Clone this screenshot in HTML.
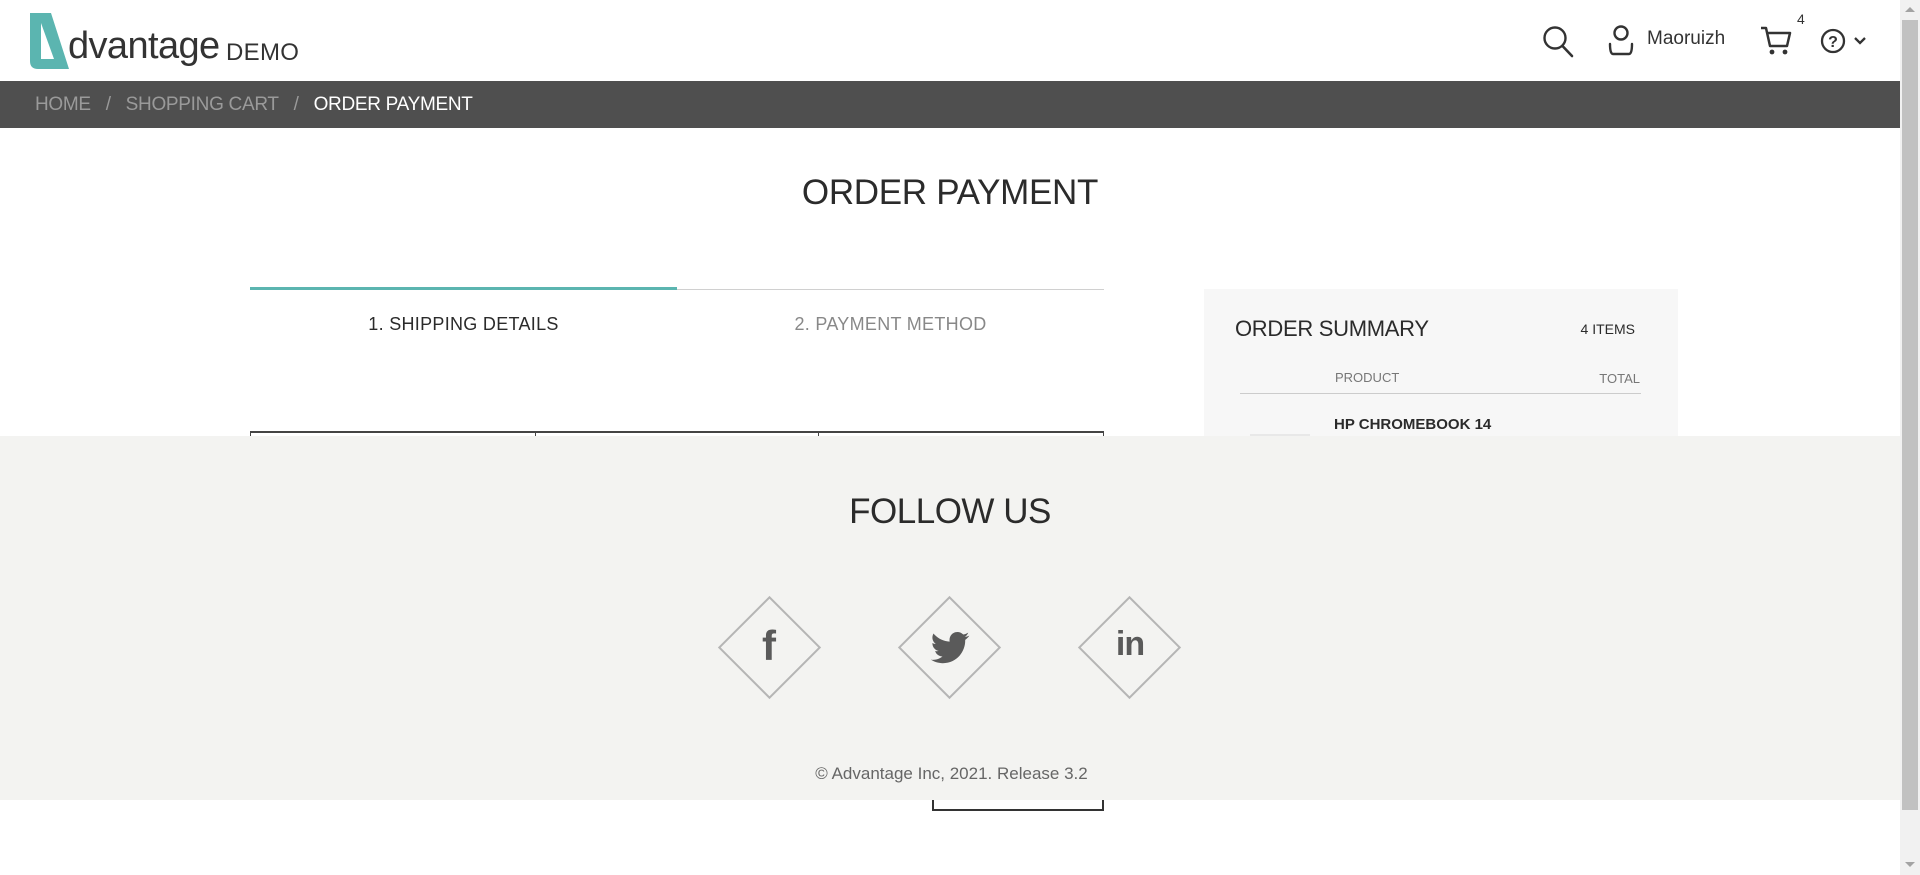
<!DOCTYPE html>
<html><head><meta charset="utf-8"><style>
*{margin:0;padding:0;box-sizing:border-box}
body{width:1920px;height:875px;overflow:hidden;background:#fff;font-family:"Liberation Sans",sans-serif;position:relative;color:#2b2b2b}
.abs{position:absolute}
</style></head><body>
<div class="abs" style="left:0;top:0;width:1900px;height:81px;background:#fff"></div>
<svg class="abs" style="left:0;top:0" width="80" height="80" viewBox="0 0 80 80">
<path d="M30 13 H51 L69 69 H38 Q30 69 30 61 Z M41 23 L54 59 H41 Z" fill="#5bb5b0" fill-rule="evenodd"/>
</svg>
<div class="abs" style="left:68px;top:25px;font-size:38px;letter-spacing:-0.6px;color:#333">dvantage</div>
<div class="abs" style="left:226px;top:39px;font-size:24px;color:#333;letter-spacing:0.3px">DEMO</div>
<svg class="abs" style="left:1541px;top:25px" width="36" height="34" viewBox="0 0 36 34"><circle cx="14" cy="13" r="10.5" fill="none" stroke="#333" stroke-width="2.4"/><path d="M21.5 21 L31 31" stroke="#333" stroke-width="2.6" stroke-linecap="round"/></svg>
<svg class="abs" style="left:1607px;top:25px" width="28" height="31" viewBox="0 0 28 31"><circle cx="14" cy="8" r="6.5" fill="none" stroke="#333" stroke-width="2.4"/><path d="M3 19 Q3 29 6 29 H22 Q25 29 25 19" fill="none" stroke="#333" stroke-width="2.4" stroke-linecap="round"/></svg>
<div class="abs" style="left:1647px;top:28px;font-size:19px;color:#333">Maoruizh</div>
<svg class="abs" style="left:1760px;top:25px" width="34" height="32" viewBox="0 0 34 32"><path d="M1 3 H6 L10 21 H27 L30 8 H8" fill="none" stroke="#333" stroke-width="2.5" stroke-linejoin="round"/><circle cx="12" cy="27" r="2.4" fill="#333"/><circle cx="25" cy="27" r="2.4" fill="#333"/></svg>
<div class="abs" style="left:1797px;top:11px;font-size:14px;color:#333">4</div>
<svg class="abs" style="left:1820px;top:28px" width="52" height="28" viewBox="0 0 52 28"><circle cx="13" cy="13" r="11" fill="none" stroke="#333" stroke-width="2.3"/><text x="13" y="19" font-family="Liberation Sans" font-size="16" font-weight="bold" text-anchor="middle" fill="#333">?</text><path d="M35 10 L40 15 L45 10" fill="none" stroke="#333" stroke-width="2.3"/></svg>
<div class="abs" style="left:1900px;top:0;width:20px;height:875px;background:#f1f1f1"></div>
<div class="abs" style="left:1902px;top:20px;width:16px;height:790px;background:#c1c1c1"></div>
<div class="abs" style="left:1905px;top:7px;width:0;height:0;border-left:5px solid transparent;border-right:5px solid transparent;border-bottom:5px solid #a3a3a3"></div>
<div class="abs" style="left:1905px;top:862px;width:0;height:0;border-left:5px solid transparent;border-right:5px solid transparent;border-top:5px solid #a3a3a3"></div>
<div class="abs" style="left:0;top:81px;width:1900px;height:47px;background:#4f4f4f"></div>
<div class="abs" style="left:35px;top:94px;font-size:19px;letter-spacing:-0.3px;color:#9a9a9a;white-space:nowrap">HOME&nbsp;&nbsp;&nbsp;/&nbsp;&nbsp;&nbsp;SHOPPING CART&nbsp;&nbsp;&nbsp;/&nbsp;&nbsp;&nbsp;<span style="color:#fff">ORDER PAYMENT</span></div>
<div class="abs" style="left:0;top:173px;width:1900px;text-align:center;font-size:35px;letter-spacing:-0.3px;color:#2b2b2b">ORDER PAYMENT</div>
<div class="abs" style="left:250px;top:289px;width:854px;height:1px;background:#d0d0d0"></div>
<div class="abs" style="left:250px;top:287px;width:427px;height:3px;background:#5bb5b0"></div>
<div class="abs" style="left:250px;top:314px;width:427px;text-align:center;font-size:18px;letter-spacing:0.3px;color:#2b2b2b">1. SHIPPING DETAILS</div>
<div class="abs" style="left:677px;top:314px;width:427px;text-align:center;font-size:18px;letter-spacing:0.3px;color:#888">2. PAYMENT METHOD</div>
<div class="abs" style="left:250px;top:431px;width:854px;height:2px;background:#444"></div>
<div class="abs" style="left:250px;top:431px;width:1px;height:8px;background:#444"></div>
<div class="abs" style="left:535px;top:431px;width:1px;height:8px;background:#444"></div>
<div class="abs" style="left:818px;top:431px;width:1px;height:8px;background:#444"></div>
<div class="abs" style="left:1103px;top:431px;width:1px;height:8px;background:#444"></div>
<div class="abs" style="left:1204px;top:289px;width:474px;height:160px;background:#f7f7f7"></div>
<div class="abs" style="left:1235px;top:316px;font-size:22px;letter-spacing:-0.3px;color:#2b2b2b">ORDER SUMMARY</div>
<div class="abs" style="left:1568px;top:321px;width:67px;text-align:right;font-size:14px;color:#2b2b2b">4 ITEMS</div>
<div class="abs" style="left:1335px;top:370px;font-size:13px;color:#777">PRODUCT</div>
<div class="abs" style="left:1580px;top:371px;width:60px;text-align:right;font-size:13px;color:#777">TOTAL</div>
<div class="abs" style="left:1240px;top:393px;width:401px;height:1px;background:#ccc"></div>
<div class="abs" style="left:1334px;top:416px;font-size:15px;font-weight:bold;color:#2b2b2b">HP CHROMEBOOK 14</div>
<div class="abs" style="left:1250px;top:434px;width:60px;height:4px;background:#e8e8e8"></div>
<div class="abs" style="left:0;top:436px;width:1900px;height:364px;background:#f3f3f1"></div>
<div class="abs" style="left:0;top:492px;width:1900px;text-align:center;font-size:35px;letter-spacing:-0.5px;color:#2b2b2b">FOLLOW US</div>
<div class="abs" style="left:733px;top:611px;width:73px;height:73px;border:2px solid #b5b5b5;transform:rotate(45deg)"></div>
<div class="abs" style="left:913px;top:611px;width:73px;height:73px;border:2px solid #b5b5b5;transform:rotate(45deg)"></div>
<div class="abs" style="left:1093px;top:611px;width:73px;height:73px;border:2px solid #b5b5b5;transform:rotate(45deg)"></div>
<div class="abs" style="left:749px;top:622px;width:40px;text-align:center;font-size:42px;font-weight:bold;color:#5a5a5a">f</div>
<svg class="abs" style="left:930px;top:632px" width="40" height="32" viewBox="0 0 24 20"><path fill="#5a5a5a" d="M24 2.3c-.9.4-1.8.7-2.8.8 1-.6 1.8-1.6 2.2-2.7-1 .6-2 1-3.1 1.2C19.3.6 18 0 16.6 0c-2.7 0-4.9 2.2-4.9 4.9 0 .4 0 .8.1 1.1C7.7 5.8 4.1 3.9 1.7.9c-.4.7-.7 1.6-.7 2.5 0 1.7.9 3.2 2.2 4.1-.8 0-1.6-.2-2.2-.6v.1c0 2.4 1.7 4.4 3.9 4.8-.4.1-.8.2-1.3.2-.3 0-.6 0-.9-.1.6 2 2.4 3.4 4.6 3.4-1.7 1.3-3.8 2.1-6.1 2.1-.4 0-.8 0-1.2-.1 2.2 1.4 4.8 2.2 7.5 2.2 9.1 0 14-7.5 14-14v-.6c1-.7 1.8-1.6 2.5-2.5z"/></svg>
<div class="abs" style="left:1108px;top:625px;width:44px;text-align:center;font-size:34px;font-weight:bold;color:#5a5a5a;letter-spacing:-1px">in</div>
<div class="abs" style="left:0;top:764px;width:1900px;text-align:center;font-size:17px;color:#666;padding-left:3px">© Advantage Inc, 2021. Release 3.2</div>
<div class="abs" style="left:932px;top:800px;width:172px;height:11px;border:2px solid #333;border-top:none"></div>
</body></html>
